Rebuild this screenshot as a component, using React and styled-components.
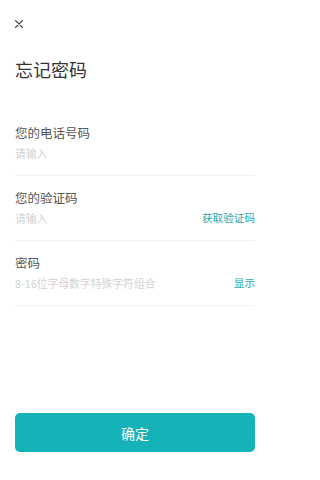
import React from "react";
import styled, { createGlobalStyle } from "styled-components";

const Global = createGlobalStyle`
  html, body { margin: 0; padding: 0; background: #fff; }
  body { font-family: "Noto Sans CJK SC", "Noto Sans", sans-serif; }
  * { box-sizing: border-box; }
`;

const Page = styled.div`
  width: 270px;
  min-height: 100vh;
  display: flex;
  flex-direction: column;
  padding: 0 15px 28px;
`;

const TopBar = styled.div`
  height: 48px;
  display: flex;
  align-items: center;
`;

const Close = styled.button`
  border: 0;
  background: none;
  padding: 0;
  width: 8px;
  height: 8px;
  display: flex;
  align-items: center;
  justify-content: center;
`;

const Title = styled.h1`
  margin: 9px 0 30px;
  font-size: 18px;
  line-height: 24px;
  font-weight: 400;
  color: #333;
`;

const Field = styled.div`
  padding: 13px 0 14px;
  border-bottom: 1px solid #f1f1f1;
`;

const Label = styled.div`
  font-size: 12.5px;
  line-height: 18px;
  color: #555;
`;

const InputRow = styled.div`
  margin-top: 3px;
  height: 16px;
  display: flex;
  align-items: center;
  justify-content: space-between;
`;

const Placeholder = styled.span`
  font-size: 10.8px;
  line-height: 16px;
  color: #d2d2d2;
`;

const Action = styled.span`
  font-size: 10.6px;
  line-height: 16px;
  color: #23a9ae;
`;

const Submit = styled.button`
  margin-top: auto;
  height: 39px;
  width: 100%;
  border: 0;
  border-radius: 5px;
  background: #15b2b8;
  color: #fff;
  font-family: inherit;
  font-size: 14px;
`;

const fields = [
  { label: "您的电话号码", placeholder: "请输入" },
  { label: "您的验证码", placeholder: "请输入", action: "获取验证码" },
  { label: "密码", placeholder: "8-16位字母数字特殊字符组合", action: "显示" },
];

export default function App() {
  return (
    <>
      <Global />
      <Page>
        <TopBar>
          <Close aria-label="关闭">
            <svg width="8" height="8" viewBox="0 0 8 8">
              <path d="M0.5 0.5 L7.5 7.5 M7.5 0.5 L0.5 7.5" stroke="#444" strokeWidth="1.1" strokeLinecap="round" />
            </svg>
          </Close>
        </TopBar>
        <Title>忘记密码</Title>
        {fields.map((f) => (
          <Field key={f.label}>
            <Label>{f.label}</Label>
            <InputRow>
              <Placeholder>{f.placeholder}</Placeholder>
              {f.action && <Action>{f.action}</Action>}
            </InputRow>
          </Field>
        ))}
        <Submit>确定</Submit>
      </Page>
    </>
  );
}
